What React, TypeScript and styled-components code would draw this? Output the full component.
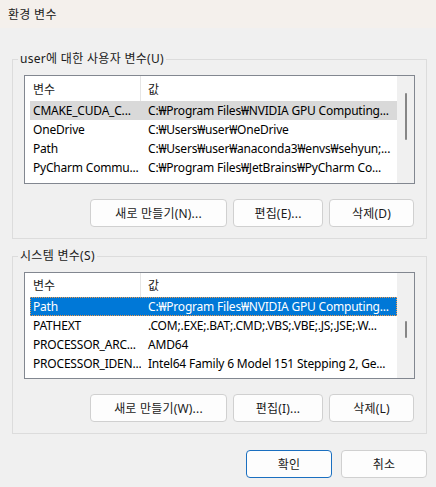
import React from "react";
import styled, { createGlobalStyle } from "styled-components";

const GlobalStyle = createGlobalStyle`
  html, body { margin: 0; padding: 0; }
  body {
    background: #f0f0f0;
    font-family: "Noto Sans", "Noto Sans CJK KR", sans-serif;
    font-size: 12px;
    color: #000;
  }
`;

const Window = styled.div`
  width: 436px;
  height: 487px;
  display: flex;
  flex-direction: column;
  background: #f0f0f0;
  overflow: hidden;
`;

const TitleBar = styled.div`
  height: 28px;
  flex: none;
  display: flex;
  align-items: center;
  padding-left: 8px;
  background: #f4f0ec;
  font-size: 12px;
  letter-spacing: 0.3px;
  color: #1a1a1a;
`;

const Body = styled.div`
  display: flex;
  flex-direction: column;
  padding: 23px 9px 0 12px;
`;

const Group = styled.fieldset<{ $gap?: number }>`
  margin: ${(p) => p.$gap ?? 0}px 0 0 0;
  padding: 8px 11px 11px 11px;
  border: 1px solid #dcdcdc;
  min-width: 0;
  display: flex;
  flex-direction: column;
`;

const Legend = styled.legend`
  margin-left: -6px;
  padding: 0 2px;
  line-height: 16px;
  letter-spacing: 0.3px;
  color: #1a1a1a;
`;

const ListBox = styled.div<{ $h: number }>`
  height: ${(p) => p.$h}px;
  box-sizing: border-box;
  border: 1px solid #828790;
  background: #fff;
  display: flex;
  overflow: hidden;
`;

const TableArea = styled.div`
  flex: 1;
  min-width: 0;
  display: flex;
  flex-direction: column;
  overflow: hidden;
`;

const Header = styled.div<{ $h: number }>`
  height: ${(p) => p.$h}px;
  flex: none;
  display: flex;
  align-items: center;
`;

const HeadCell = styled.div<{ $w?: number; $divider?: boolean }>`
  ${(p) => (p.$w ? `width: ${p.$w}px; flex: none;` : "flex: 1;")}
  box-sizing: border-box;
  height: 100%;
  display: flex;
  align-items: center;
  padding-left: ${(p) => (p.$divider ? 8 : 7)}px;
  border-right: ${(p) => (p.$divider ? "1px solid #e5e5e5" : "none")};
  color: #1a1a1a;
`;

const Rows = styled.div`
  padding-left: 5px;
  display: flex;
  flex-direction: column;
`;

const Row = styled.div<{ $sel?: "focus" | "blur" }>`
  height: 19px;
  flex: none;
  display: flex;
  align-items: center;
  box-sizing: border-box;
  background: ${(p) =>
    p.$sel === "focus" ? "#0078d7" : p.$sel === "blur" ? "#d9d9d9" : "transparent"};
  color: ${(p) => (p.$sel === "focus" ? "#fff" : "#000")};
  outline: ${(p) => (p.$sel === "focus" ? "1px dotted #f39a4a" : "none")};
  outline-offset: -1px;
`;

const Cell = styled.div<{ $w?: number; $pl: number }>`
  ${(p) => (p.$w ? `width: ${p.$w}px; flex: none;` : "flex: 1;")}
  min-width: 0;
  box-sizing: border-box;
  padding-left: ${(p) => p.$pl}px;
  letter-spacing: -0.2px;
  white-space: nowrap;
  overflow: hidden;
`;

const ScrollTrack = styled.div`
  width: 17px;
  flex: none;
  background: #f0f0f0;
  display: flex;
  justify-content: center;
`;

const Thumb = styled.div`
  width: 2px;
  background: #868686;
  border-radius: 1px;
  margin-left: 1px;
`;

const ButtonRow = styled.div<{ $top: number }>`
  display: flex;
  justify-content: flex-end;
  gap: 6px;
  margin-top: ${(p) => p.$top}px;
  padding-right: 1px;
`;

const Button = styled.button<{ $w: number; $default?: boolean }>`
  width: ${(p) => p.$w}px;
  height: 28px;
  box-sizing: border-box;
  border-radius: 4px;
  border: 1px solid ${(p) => (p.$default ? "#1a6fc0" : "#d0d0d0")};
  background: #fdfdfd;
  font-family: inherit;
  font-size: 12px;
  letter-spacing: 0.2px;
  color: #1a1a1a;
  padding: 0;
  display: flex;
  align-items: center;
  justify-content: center;
`;

const Footer = styled.div`
  display: flex;
  justify-content: flex-end;
  gap: 9px;
  margin-top: 16px;
`;

type Item = { name: string; value: string; sel?: "focus" | "blur" };

const W = "\u20A9";

const userVars: Item[] = [
  { name: "CMAKE_CUDA_C...", value: `C:${W}Program Files${W}NVIDIA GPU Computing...`, sel: "blur" },
  { name: "OneDrive", value: `C:${W}Users${W}user${W}OneDrive` },
  { name: "Path", value: `C:${W}Users${W}user${W}anaconda3${W}envs${W}sehyun;...` },
  { name: "PyCharm Commu...", value: `C:${W}Program Files${W}JetBrains${W}PyCharm Co...` },
];

const sysVars: Item[] = [
  { name: "Path", value: `C:${W}Program Files${W}NVIDIA GPU Computing...`, sel: "focus" },
  { name: "PATHEXT", value: ".COM;.EXE;.BAT;.CMD;.VBS;.VBE;.JS;.JSE;.W..." },
  { name: "PROCESSOR_ARC...", value: "AMD64" },
  { name: "PROCESSOR_IDEN...", value: "Intel64 Family 6 Model 151 Stepping 2, Ge..." },
];

function VarList({
  items,
  height,
  headerH,
  thumbTop,
  thumbH,
}: {
  items: Item[];
  height: number;
  headerH: number;
  thumbTop: number;
  thumbH: number;
}) {
  return (
    <ListBox $h={height}>
      <TableArea>
        <Header $h={headerH}>
          <HeadCell $w={116} $divider>
            변수
          </HeadCell>
          <HeadCell>값</HeadCell>
        </Header>
        <Rows>
          {items.map((it) => (
            <Row key={it.name} $sel={it.sel}>
              <Cell $w={111} $pl={3}>
                {it.name}
              </Cell>
              <Cell $pl={7}>{it.value}</Cell>
            </Row>
          ))}
        </Rows>
      </TableArea>
      <ScrollTrack>
        <Thumb style={{ marginTop: thumbTop, height: thumbH }} />
      </ScrollTrack>
    </ListBox>
  );
}

export default function App() {
  return (
    <>
      <GlobalStyle />
      <Window>
        <TitleBar>환경 변수</TitleBar>
        <Body>
          <Group>
            <Legend>user에 대한 사용자 변수(U)</Legend>
            <VarList items={userVars} height={109} headerH={25} thumbTop={17} thumbH={47} />
            <ButtonRow $top={15}>
              <Button $w={137}>새로 만들기(N)...</Button>
              <Button $w={90}>편집(E)...</Button>
              <Button $w={85}>삭제(D)</Button>
            </ButtonRow>
          </Group>
          <Group $gap={9}>
            <Legend>시스템 변수(S)</Legend>
            <VarList items={sysVars} height={107} headerH={24} thumbTop={48} thumbH={17} />
            <ButtonRow $top={15}>
              <Button $w={137}>새로 만들기(W)...</Button>
              <Button $w={90}>편집(I)...</Button>
              <Button $w={85}>삭제(L)</Button>
            </ButtonRow>
          </Group>
          <Footer>
            <Button $w={86} $default>
              확인
            </Button>
            <Button $w={86}>취소</Button>
          </Footer>
        </Body>
      </Window>
    </>
  );
}
